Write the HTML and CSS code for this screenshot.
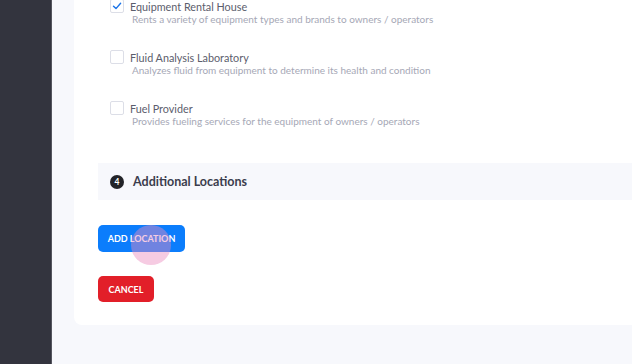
FILE: index.html
```html
<!DOCTYPE html>
<html lang="en">
<head>
    <meta charset="UTF-8">
    <title>Business Types</title>
    <link rel="stylesheet" href="styles.css">
</head>
<body>
    <div class="sidebar"></div>

    <div class="main">
        <div class="card">
            <!-- Business types -->
            <div class="options">
                <label class="option">
                    <span class="checkbox checked">
                        <svg width="10" height="10" viewBox="0 0 10 10"><path d="M1.5 5.2 L4 7.6 L8.6 2.2" fill="none" stroke="#1a73e8" stroke-width="1.4" stroke-linecap="round" stroke-linejoin="round"/></svg>
                    </span>
                    <span class="option-text">
                        <span class="option-title">Equipment Rental House</span>
                        <span class="option-desc">Rents a variety of equipment types and brands to owners / operators</span>
                    </span>
                </label>
                <label class="option">
                    <span class="checkbox"></span>
                    <span class="option-text">
                        <span class="option-title">Fluid Analysis Laboratory</span>
                        <span class="option-desc">Analyzes fluid from equipment to determine its health and condition</span>
                    </span>
                </label>
                <label class="option">
                    <span class="checkbox"></span>
                    <span class="option-text">
                        <span class="option-title">Fuel Provider</span>
                        <span class="option-desc">Provides fueling services for the equipment of owners / operators</span>
                    </span>
                </label>
            </div>

            <!-- Step 4 -->
            <div class="section-head">
                <span class="step">4</span>
                <h3>Additional Locations</h3>
            </div>

            <div class="actions">
                <div class="btn-wrap">
                    <button class="btn btn-primary">ADD LOCATION</button>
                    <span class="click-dot"></span>
                </div>
                <button class="btn btn-danger">CANCEL</button>
            </div>
        </div>
    </div>
</body>
</html>
```

FILE: styles.css
```css
:root {
    --sidebar: #33343e;
    --page-bg: #f7f8fc;
    --text: #5b5d6c;
    --text-light: #a6a8b6;
    --heading: #3b3d4d;
    --blue: #0b7dfc;
    --red: #e21f29;
}

* {
    margin: 0;
    padding: 0;
    box-sizing: border-box;
}

body {
    font-family: 'Lato', 'Open Sans', sans-serif;
    display: flex;
    height: 364px;
    overflow: hidden;
    background: var(--page-bg);
}

.sidebar {
    width: 52px;
    flex-shrink: 0;
    background: var(--sidebar);
    border-right: 1px solid #55565f;
}

.main {
    flex: 1;
    padding-left: 22px;
    overflow: hidden;
}

.card {
    background: #fff;
    margin-top: -1px;
    margin-right: -40px;
    padding: 0 0 23px 24px;
    border-radius: 0 0 0 8px;
}

/* Options */
.options {
    padding-left: 12px;
}

.option {
    display: flex;
    gap: 6px;
    height: 51px;
}

.checkbox {
    width: 14px;
    height: 14px;
    border: 1px solid #dcdee7;
    border-radius: 2px;
    display: flex;
    align-items: center;
    justify-content: center;
    flex-shrink: 0;
}

.option-text {
    display: flex;
    flex-direction: column;
    padding-top: 1px;
}

.option-title {
    font-size: 10.8px;
    line-height: 13px;
    color: var(--text);
}

.option-desc {
    font-size: 10px;
    line-height: 12px;
    color: var(--text-light);
    padding-left: 2px;
}

/* Section header */
.section-head {
    margin-top: 11px;
    height: 37px;
    background: var(--page-bg);
    display: flex;
    align-items: center;
    gap: 9px;
    padding-left: 12px;
}

.step {
    width: 14px;
    height: 14px;
    border-radius: 50%;
    background: #222328;
    color: #fff;
    font-size: 8.5px;
    font-weight: 700;
    display: flex;
    align-items: center;
    justify-content: center;
}

.section-head h3 {
    font-size: 12.5px;
    font-weight: 700;
    color: var(--heading);
}

/* Buttons */
.actions {
    margin-top: 25px;
    display: flex;
    flex-direction: column;
    align-items: flex-start;
    gap: 24px;
}

.btn-wrap {
    position: relative;
}

.btn {
    border: none;
    border-radius: 5px;
    color: #fff;
    font-family: inherit;
    font-size: 9px;
    font-weight: 700;
    height: 27px;
    padding: 0;
    white-space: nowrap;
    text-align: center;
    display: block;
}

.btn-primary {
    background: var(--blue);
    width: 87px;
}

.btn-danger {
    background: var(--red);
    width: 56px;
    height: 26px;
}

.click-dot {
    position: absolute;
    left: 33px;
    top: 0;
    width: 40px;
    height: 40px;
    border-radius: 50%;
    background: rgba(234, 140, 190, 0.45);
}
```
